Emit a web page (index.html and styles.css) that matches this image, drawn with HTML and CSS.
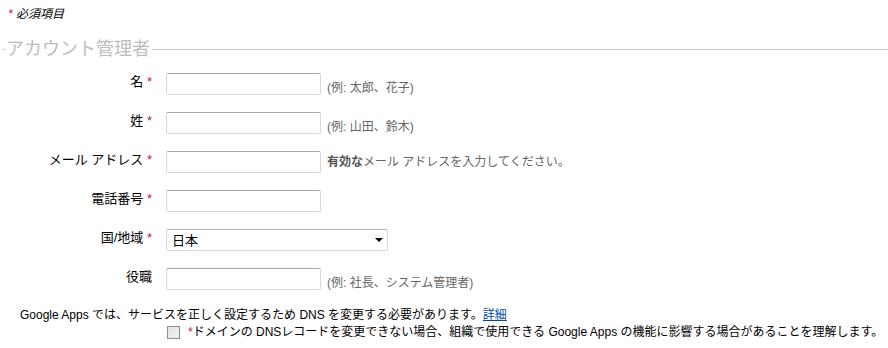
FILE: index.html
```html
<!DOCTYPE html>
<html lang="ja">
<head>
<meta charset="UTF-8">
<title>アカウント管理者</title>
<link rel="stylesheet" href="styles.css">
</head>
<body>

<div class="required-note"><span class="star">*</span> 必須項目</div>

<fieldset class="admin">
    <legend>アカウント管理者</legend>

    <div class="row low">
        <label class="label">名 <span class="star">*</span></label>
        <input type="text" class="field">
        <span class="hint">(例: 太郎、花子)</span>
    </div>

    <div class="row low">
        <label class="label">姓 <span class="star">*</span></label>
        <input type="text" class="field">
        <span class="hint">(例: 山田、鈴木)</span>
    </div>

    <div class="row mid">
        <label class="label">メール アドレス <span class="star">*</span></label>
        <input type="text" class="field">
        <span class="hint"><b>有効な</b>メール アドレスを入力してください。</span>
    </div>

    <div class="row">
        <label class="label">電話番号 <span class="star">*</span></label>
        <input type="text" class="field">
    </div>

    <div class="row">
        <label class="label">国/地域 <span class="star">*</span></label>
        <div class="select-wrap">
            <select class="select">
                <option>日本</option>
            </select>
            <span class="arrow"></span>
        </div>
    </div>

    <div class="row low">
        <label class="label">役職</label>
        <input type="text" class="field">
        <span class="hint">(例: 社長、システム管理者)</span>
    </div>
</fieldset>

<p class="dns-note">Google Apps では、サービスを正しく設定するため DNS を変更する必要があります。<a href="#">詳細</a></p>

<div class="agree">
    <span class="checkbox"></span>
    <span><span class="star">*</span>ドメインの DNSレコードを変更できない場合、組織で使用できる Google Apps の機能に影響する場合があることを理解します。</span>
</div>

</body>
</html>
```

FILE: styles.css
```css
body {
    margin: 0;
    font-family: Arial, "Liberation Sans", "Noto Sans CJK JP", sans-serif;
    font-size: 12px;
    color: #000;
    background: #fff;
}

.star {
    color: #c0126b;
}

.required-note {
    padding: 7px 0 0 8px;
    font-style: italic;
    line-height: 14px;
}

.admin {
    margin: 18px 0 0 3px;
    padding: 0;
    border: none;
    border-top: 1px solid #c8c8c8;
}

.admin legend {
    margin-left: 3px;
    padding: 0 2px 0 0;
    font-size: 18px;
    color: #bdbdbd;
    line-height: 20px;
}

.row {
    display: flex;
    align-items: flex-start;
    height: 39px;
}

.row:first-of-type {
    margin-top: 14px;
}

.label {
    width: 149px;
    text-align: right;
    font-size: 13px;
    line-height: 16px;
    padding-top: 1px;
    margin-right: 14px;
}

.field {
    box-sizing: border-box;
    width: 155px;
    height: 22px;
    margin: 0;
    border: 1px solid #d9d9d9;
    border-top-color: #a9a9a9;
    border-radius: 2px;
}

.hint {
    margin-left: 6px;
    color: #666;
    line-height: 14px;
}

.row.low .hint {
    align-self: flex-start;
    margin-top: 8px;
}

.row.mid .hint {
    align-self: flex-start;
    margin-top: 4px;
}

.hint b {
    color: #555;
}

.select-wrap {
    position: relative;
}

.select {
    box-sizing: border-box;
    width: 222px;
    height: 22px;
    margin: 0;
    padding: 0 0 0 5px;
    appearance: none;
    -webkit-appearance: none;
    background: #fff;
    border: 1px solid #d9d9d9;
    border-top-color: #b5b5b5;
    border-radius: 2px;
    font-family: inherit;
    font-size: 13px;
    color: #000;
}

.arrow {
    position: absolute;
    right: 5px;
    top: 9px;
    border-left: 4px solid transparent;
    border-right: 4px solid transparent;
    border-top: 4px solid #000;
}

.dns-note {
    margin: 1px 0 0 20px;
    line-height: 14px;
}

.dns-note a {
    color: #0645ad;
}

.agree {
    display: flex;
    align-items: center;
    margin: 3px 0 0 167px;
    line-height: 14px;
}

.checkbox {
    box-sizing: border-box;
    width: 13px;
    height: 13px;
    margin-right: 8px;
    border: 1px solid #8f8f8f;
    background: linear-gradient(135deg, #dcdcdc, #f7f7f7);
    box-shadow: inset 0 0 0 1px #e8e8e8;
}
```
